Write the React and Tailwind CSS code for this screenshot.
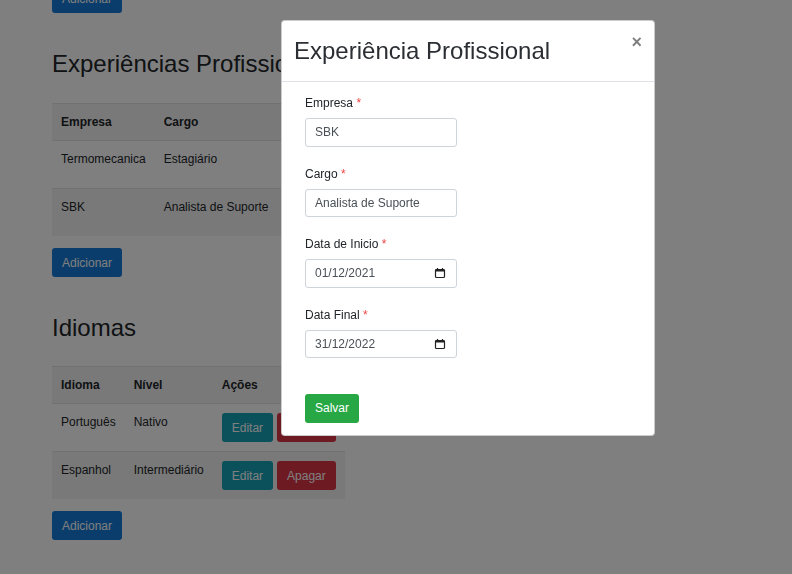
const experiencias = [
    { empresa: 'Termomecanica', cargo: 'Estagiário', inicio: '01/02/2019', fim: '31/01/2021' },
    { empresa: 'SBK', cargo: 'Analista de Suporte', inicio: '01/12/2021', fim: '31/12/2022' },
];

const idiomas = [
    { idioma: 'Português', nivel: 'Nativo' },
    { idioma: 'Espanhol', nivel: 'Intermediário' },
];

const Btn = ({ color, children }) => (
    <button className={`h-[29px] px-[10px] rounded-[3px] text-white text-[12px] leading-[18px] ${color}`}>
        {children}
    </button>
);

const Acoes = () => (
    <div className="flex gap-[4px]">
        <Btn color="bg-[#17a2b8]">Editar</Btn>
        <Btn color="bg-[#dc3545]">Apagar</Btn>
    </div>
);

const Th = ({ children }) => (
    <th className="px-[9px] py-[9px] text-left align-top font-bold">{children}</th>
);

const Td = ({ children }) => (
    <td className="px-[9px] py-[9px] align-top whitespace-nowrap">{children}</td>
);

const CalendarIcon = () => (
    <svg width="12" height="12" viewBox="0 0 12 12">
        <rect x="1.5" y="2.5" width="9" height="8" rx="1" fill="none" stroke="#222" strokeWidth="1.2" />
        <rect x="1.5" y="2.5" width="9" height="2" fill="#222" />
        <path d="M3.5 1v2M8.5 1v2" stroke="#222" strokeWidth="1.2" />
    </svg>
);

const Field = ({ label, value, date }) => (
    <div className="mb-[18px]">
        <label className="block mb-[6px] text-[#212529]">
            {label} <span className="text-[#ef4444]">*</span>
        </label>
        <div className="flex items-center justify-between w-[152px] h-[28.5px] pl-[9px] pr-[10px] border border-[#ced4da] rounded-[3px] text-[#495057]">
            <span>{value}</span>
            {date && <CalendarIcon />}
        </div>
    </div>
);

export default function App() {
    return (
        <div className="relative min-h-[574px] overflow-hidden bg-white font-['Liberation_Sans',Arial,sans-serif] text-[12px] leading-[18px] text-[#212529]">
            <div className="pl-[52px] mt-[-16px]">
                <Btn color="bg-[#157ad6]">Adicionar</Btn>

                <h2 className="mt-[36px] mb-[25px] text-[24px] leading-[29px] font-medium">Experiências Profissionais</h2>
                <table className="border-collapse mb-[12px]">
                    <thead>
                        <tr className="border-t border-[#dee2e6] bg-black/5">
                            <Th>Empresa</Th>
                            <Th>Cargo</Th>
                            <Th>Data de Inicio</Th>
                            <Th>Data Final</Th>
                            <Th>Ações</Th>
                        </tr>
                    </thead>
                    <tbody>
                        {experiencias.map((e, idx) => (
                            <tr key={idx} className={`border-t border-[#dee2e6] ${idx % 2 ? 'bg-black/5' : ''}`}>
                                <Td>{e.empresa}</Td>
                                <Td>{e.cargo}</Td>
                                <Td>{e.inicio}</Td>
                                <Td>{e.fim}</Td>
                                <Td><Acoes /></Td>
                            </tr>
                        ))}
                    </tbody>
                </table>
                <Btn color="bg-[#157ad6]">Adicionar</Btn>

                <h2 className="mt-[36px] mb-[24px] text-[24px] leading-[29px] font-medium">Idiomas</h2>
                <table className="border-collapse mb-[12px]">
                    <thead>
                        <tr className="border-t border-[#dee2e6] bg-black/5">
                            <Th>Idioma</Th>
                            <Th>Nível</Th>
                            <Th>Ações</Th>
                        </tr>
                    </thead>
                    <tbody>
                        {idiomas.map((i, idx) => (
                            <tr key={idx} className={`border-t border-[#dee2e6] ${idx % 2 ? 'bg-black/5' : ''}`}>
                                <Td>{i.idioma}</Td>
                                <Td>{i.nivel}</Td>
                                <Td><Acoes /></Td>
                            </tr>
                        ))}
                    </tbody>
                </table>
                <Btn color="bg-[#157ad6]">Adicionar</Btn>
            </div>

            {/* modal */}
            <div className="fixed inset-0 bg-black/50">
                <div className="absolute left-[281px] top-[20px] w-[374px] bg-white border border-black/20 rounded-[4px]">
                    <div className="flex items-start justify-between p-[12px] border-b border-[#dee2e6]">
                        <h2 className="text-[24px] leading-[36px] font-normal text-[#2b2f33]">Experiência Profissional</h2>
                        <button className="text-[18px] leading-none font-bold text-black opacity-50">×</button>
                    </div>
                    <div className="pt-[12px] px-[23px] pb-[12px]">
                        <Field label="Empresa" value="SBK" />
                        <Field label="Cargo" value="Analista de Suporte" />
                        <Field label="Data de Inicio" value="01/12/2021" date />
                        <Field label="Data Final" value="31/12/2022" date />
                        <button className="mt-[18px] h-[28.5px] px-[10px] rounded-[3px] bg-[#28a745] text-white">Salvar</button>
                    </div>
                </div>
            </div>
        </div>
    );
}
